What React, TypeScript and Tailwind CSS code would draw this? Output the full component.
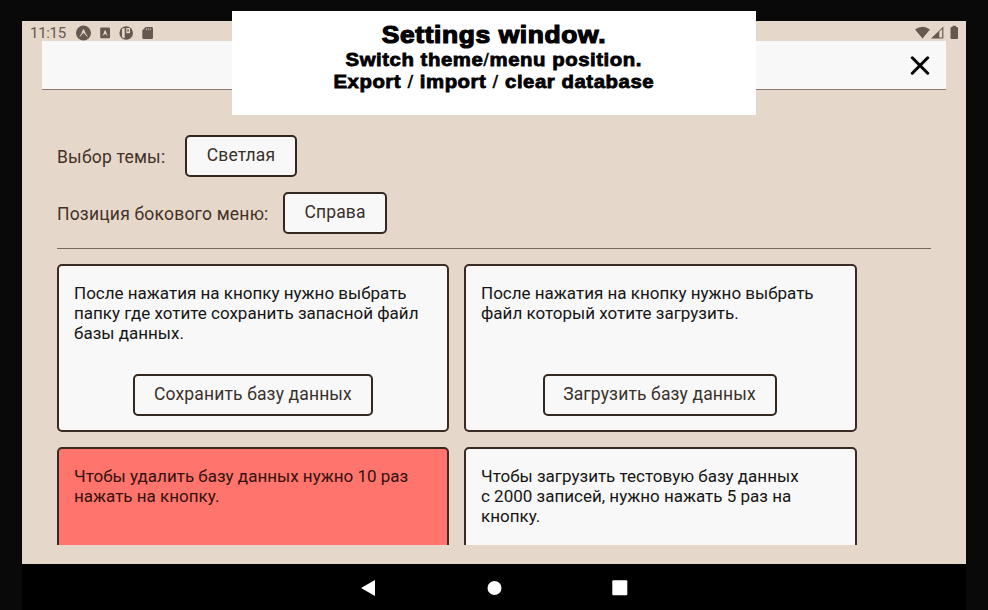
import type { ReactNode } from "react";

function StatusBar() {
  return (
    <div className="flex h-5 items-end justify-between pl-2 pr-[7px] text-[#65584f]">
      <div className="flex h-5 items-center pt-[4px]">
        <span className="w-[46px] whitespace-nowrap text-[15px] leading-4 tracking-[-0.3px]">11:15</span>
        <svg className="h-4 w-[80px]" viewBox="0 0 80 16">
          <circle cx="7.5" cy="8" r="7.5" fill="currentColor" />
          <path d="M3.8 11.5Q5.9 9 7.2 4.8H7.9Q9.2 9 11.3 11.5L7.6 7.6Z" fill="#e6d7cb" stroke="#e6d7cb" strokeWidth=".6" />
          <rect x="24.2" y="2.6" width="9.8" height="10.6" rx="1" fill="currentColor" />
          <path d="M26.2 11Q27.8 9 28.5 5.5H29.7Q30.4 9 32 11L29.1 9Z" fill="#e6d7cb" />
          <circle cx="50.2" cy="8" r="6.8" fill="currentColor" />
          <path d="M46 4Q47.2 3.2 48.7 3V13Q47.2 12.8 46 12Z" fill="#e6d7cb" />
          <path d="M50.3 3H54V8.2H50.3Z" fill="#e6d7cb" />
        <rect x="51.3" y="4.5" width="1.5" height="2" fill="currentColor" />
          <path d="M69.6 2H75.6Q77 2 77 3.2V12.8Q77 14 75.6 14H67.7Q66.3 14 66.3 12.8V5.4Z" fill="currentColor" />
          <path d="M70.4 3V5.4M72.4 3V5.4M74.4 3V5.4" stroke="#e6d7cb" strokeWidth=".6" />
        </svg>
      </div>
      <svg className="h-4 w-11" viewBox="0 0 44 16">
        <path d="M0 4.5Q7.5-1 15 4.5L7.5 13.5Z" fill="currentColor" />
        <path d="M16 13.5L28.4 1.5V13.5Z" fill="currentColor" />
        <path d="M24.3 6.5L27.2 4V12.6H24.3Z" fill="#e6d7cb" />
        <rect x="35.5" y="2" width="7.5" height="12" rx="1" fill="currentColor" />
        <rect x="37.5" y=".8" width="3.5" height="2" fill="currentColor" />
      </svg>
    </div>
  );
}

function OutlineButton({ children, className }: { children: ReactNode; className: string }) {
  return (
    <button className={`flex h-[42px] shrink-0 justify-center whitespace-nowrap rounded-[5px] border-2 border-[#332820] bg-[#f8f8f8] pt-[6px] text-[17.5px] leading-6 tracking-[0.14px] text-[#38302b] ${className}`}>
      {children}
    </button>
  );
}

function Card({ lines, tone, children }: { lines: string[]; tone: string; children?: ReactNode }) {
  return (
    <section className={`flex h-[168px] flex-col rounded-[5px] border-2 border-[#3b2a22] px-[15px] pb-[14px] pt-[17px] ${tone}`}>
      <p className="text-[17px] leading-5">
        {lines.map((line) => (
          <span key={line} className="block whitespace-nowrap">{line}</span>
        ))}
      </p>
      <div className="mt-auto flex justify-center">{children}</div>
    </section>
  );
}

function Slash() {
  return <span className="font-normal [-webkit-text-stroke:0.3px_black]">/</span>;
}

export default function App() {
  return (
    <div className="relative h-[610px] w-[988px] overflow-hidden bg-[#090909] px-[22px] pt-[21px] font-[Roboto,sans-serif]">
      <main className="h-[543px] bg-[#e6d7cb]">
        <StatusBar />
        <header className="mx-5 flex h-[49px] items-center justify-end border-b border-[#8a7970] bg-[#f8f8f8] pr-[16px]">
          <svg className="h-[20px] w-[20px]" viewBox="0 0 20 20">
            <path d="M2.3 2.8L17.7 18.2M17.7 2.8L2.3 18.2" stroke="#000" strokeWidth="3" strokeLinecap="round" />
          </svg>
        </header>
        <div className="ml-[35px] mr-[35px] h-[455px] overflow-hidden pt-[44.5px]">
          <div className="flex h-[42px] items-center text-[17.5px] tracking-[0.2px] text-[#443126]">
            <span className="w-[128px] whitespace-nowrap pt-[3px]">Выбор темы:</span>
            <OutlineButton className="w-[112px]">Светлая</OutlineButton>
          </div>
          <div className="mt-[15px] flex h-[42px] items-center text-[17.5px] tracking-[0.2px] text-[#443126]">
            <span className="w-[226px] whitespace-nowrap pt-[3px]">Позиция бокового меню:</span>
            <OutlineButton className="w-[104px]">Справа</OutlineButton>
          </div>
          <hr className="mt-[14.5px] border-t border-[#77675d]" />
          <div className="mt-[15px] grid grid-cols-[392px_393px] gap-[15px]">
            <Card tone="bg-[#f8f8f8] text-[#151515]" lines={["После нажатия на кнопку нужно выбрать", "папку где хотите сохранить запасной файл", "базы данных."]}>
              <OutlineButton className="w-[240px]">Сохранить базу данных</OutlineButton>
            </Card>
            <Card tone="bg-[#f8f8f8] text-[#151515]" lines={["После нажатия на кнопку нужно выбрать", "файл который хотите загрузить."]}>
              <OutlineButton className="mr-[2px] w-[234px]">Загрузить базу данных</OutlineButton>
            </Card>
            <Card tone="bg-[#ff746c] text-[#35110e]" lines={["Чтобы удалить базу данных нужно 10 раз", "нажать на кнопку."]} />
            <Card tone="bg-[#f8f8f8] text-[#151515]" lines={["Чтобы загрузить тестовую базу данных", "с 2000 записей, нужно нажать 5 раз на", "кнопку."]} />
          </div>
        </div>
      </main>
      <nav className="flex h-[46px] items-center justify-center bg-black pt-[2px]">
        <svg className="h-4 w-[268px]" viewBox="0 0 268 16" fill="#fff">
          <path d="M1 8L15 0V16Z" />
          <circle cx="134.5" cy="8" r="7" />
          <rect x="252.3" y=".3" width="15" height="15" rx="1" />
        </svg>
      </nav>
      <div className="absolute left-[232px] top-[11px] flex h-[104px] w-[524px] flex-col items-center bg-white pt-[9px] text-center font-['Liberation_Sans',sans-serif] font-bold text-black">
        <h1 className="scale-x-[1.1] whitespace-nowrap text-[24px] leading-[30px] tracking-[0.55px] [-webkit-text-stroke:1.2px_black]">Settings window.</h1>
        <p className="-mt-px scale-x-[1.1] whitespace-nowrap text-[18.5px] leading-[22px] tracking-[0.5px] [-webkit-text-stroke:0.8px_black]">Switch theme<Slash />menu position.</p>
        <p className="scale-x-[1.1] whitespace-nowrap text-[18.5px] leading-[22px] tracking-[0.5px] [-webkit-text-stroke:0.8px_black]">Export <Slash /> import <Slash /> clear database</p>
      </div>
    </div>
  );
}
